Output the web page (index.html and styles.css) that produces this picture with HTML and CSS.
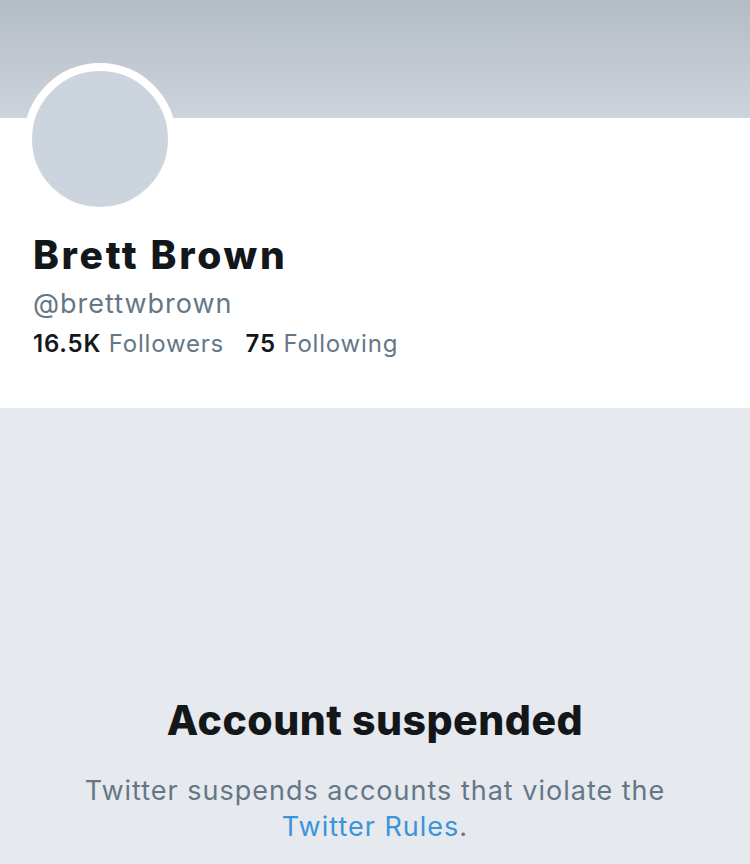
FILE: index.html
```html
<!DOCTYPE html>
<html lang="en">
<head>
    <meta charset="UTF-8">
    <meta name="viewport" content="width=device-width, initial-scale=1.0">
    <title>Brett Brown (@brettwbrown)</title>
    <link rel="stylesheet" href="styles.css">
</head>
<body>
    <div class="banner"></div>
    <div class="profile">
        <div class="avatar"></div>
        <h1 class="name">Brett Brown</h1>
        <p class="handle">@brettwbrown</p>
        <p class="stats">
            <span class="stat"><b>16.5K</b> Followers</span>
            <span class="stat"><b>75</b> Following</span>
        </p>
    </div>
    <div class="suspended">
        <h2>Account suspended</h2>
        <p>Twitter suspends accounts that violate the <a href="#">Twitter Rules</a>.</p>
    </div>
</body>
</html>
```

FILE: styles.css
```css
body {
    margin: 0;
    font-family: Inter, "Noto Sans", sans-serif;
    background-color: #e6e9ee;
    color: #14171a;
}
.banner {
    height: 118px;
    background: linear-gradient(to bottom, #b3bbc4, #cdd4dc);
}
.profile {
    display: flow-root;
    background-color: white;
    padding: 0 33px 49px;
}
.avatar {
    width: 136px;
    height: 136px;
    border-radius: 50%;
    background-color: #ccd5de;
    border: 8px solid white;
    margin: -55px 0 0 -9px;
}
.name {
    font-size: 39px;
    font-weight: 800;
    letter-spacing: 2.7px;
    margin: 16px 0 0;
    line-height: 47px;
}
.handle {
    font-size: 27px;
    letter-spacing: 1px;
    color: #657786;
    margin: 10px 0 0;
    line-height: 32px;
}
.stats {
    font-size: 24px;
    letter-spacing: 0.8px;
    color: #657786;
    margin: 9px 0 0;
    line-height: 30px;
}
.stats b {
    color: #14171a;
    font-weight: 600;
}
.stat {
    margin-right: 14px;
}
.suspended {
    text-align: center;
    padding: 288px 70px 0;
}
.suspended h2 {
    font-size: 41px;
    font-weight: 800;
    letter-spacing: 0.5px;
    margin: 0;
    line-height: 48px;
}
.suspended p {
    font-size: 27px;
    letter-spacing: 1px;
    color: #657786;
    margin: 29px 0 0;
    line-height: 36px;
}
.suspended a {
    color: #3b94d9;
    text-decoration: none;
}
```
